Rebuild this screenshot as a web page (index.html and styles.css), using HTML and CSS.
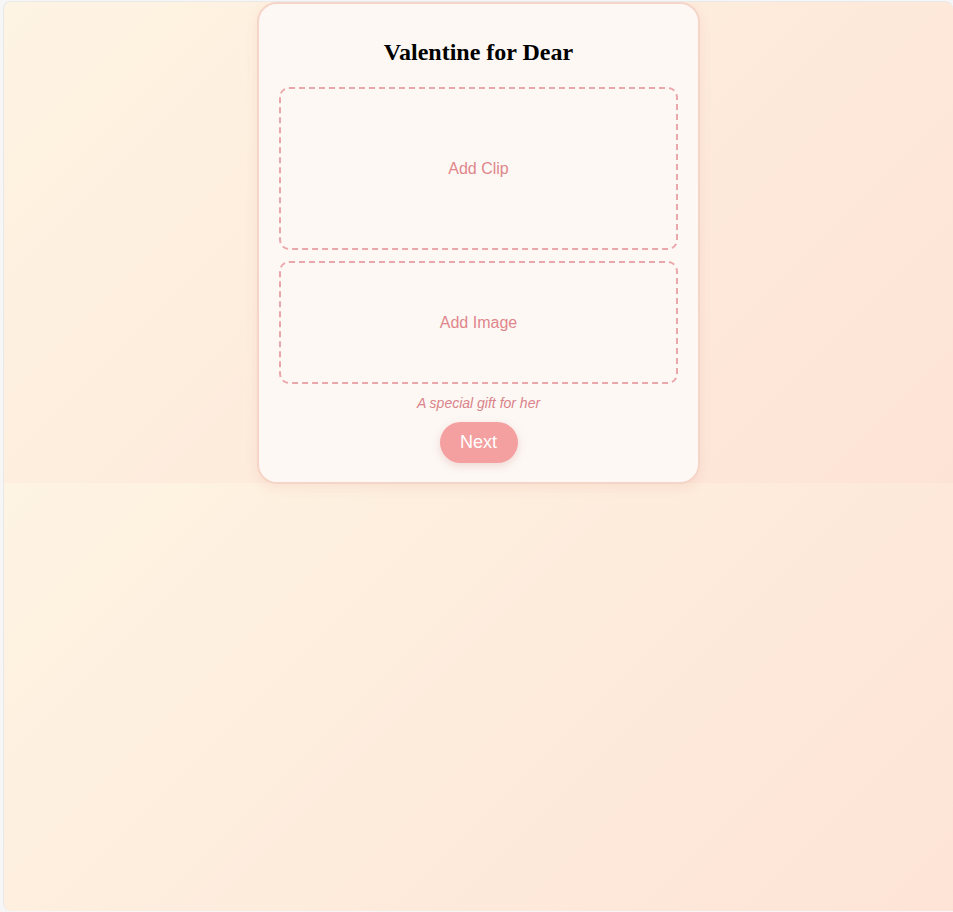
FILE: index.html
```
<!DOCTYPE html>
<html>
<head>
<meta charset="utf-8">
<link rel="stylesheet" href="styles.css">
</head>
<body>
<div class="frame">
  <div class="stage">
    <div class="card">
      <h1 class="title">Valentine for Dear</h1>
      <div class="drop drop-clip">Add Clip</div>
      <div class="drop drop-image">Add Image</div>
      <p class="tagline">A special gift for her</p>
      <button class="next">Next</button>
    </div>
  </div>
</div>
</body>
</html>
```
FILE: styles.css
```
html, body {
  margin: 0;
  padding: 0;
  background: #f6f6f6;
}
.frame {
  padding: 1px 0 0 3px;
  height: 911px;
  box-sizing: border-box;
}
.stage {
  height: 910px;
  box-sizing: border-box;
  border: 1px solid #e9e9e9;
  border-right: none;
  border-bottom: none;
  border-radius: 8px 8px 0 8px;
  background-image: linear-gradient(135deg, #fef4e3 0%, #fde3d6 100%);
  background-size: 100% 481px;
  background-repeat: repeat-y;
  display: flex;
  justify-content: center;
  align-items: flex-start;
  overflow: hidden;
}
.card {
  width: 443px;
  box-sizing: border-box;
  margin-top: 0;
  background: #fdf8f4;
  border: 2px solid #f6d5c9;
  border-radius: 20px;
  padding: 20px 20px 19px;
  box-shadow: 0 4px 12px rgba(220, 160, 140, 0.18);
  display: flex;
  flex-direction: column;
  align-items: center;
  font-family: "Liberation Sans", Arial, sans-serif;
}
.title {
  font-family: "Liberation Serif", "Times New Roman", serif;
  font-size: 24px;
  font-weight: bold;
  color: #000;
  margin: 14px 0 21px;
  line-height: 28px;
}
.drop {
  width: 100%;
  box-sizing: border-box;
  border: 2px dashed #eaa7ab;
  border-radius: 10px;
  display: flex;
  align-items: center;
  justify-content: center;
  color: #e0868b;
  font-size: 16px;
}
.drop-clip {
  height: 163px;
}
.drop-image {
  height: 123px;
  margin-top: 11px;
}
.tagline {
  margin: 11px 0 10px;
  font-size: 14px;
  font-style: italic;
  color: #d9838a;
  line-height: 17px;
}
.next {
  font-family: "Liberation Sans", Arial, sans-serif;
  font-size: 18px;
  color: #fff;
  background: #f4a0a0;
  border: none;
  border-radius: 21px;
  width: 78px;
  height: 41px;
  padding: 0;
  box-shadow: 0 3px 8px rgba(200, 120, 120, 0.25);
}
```
